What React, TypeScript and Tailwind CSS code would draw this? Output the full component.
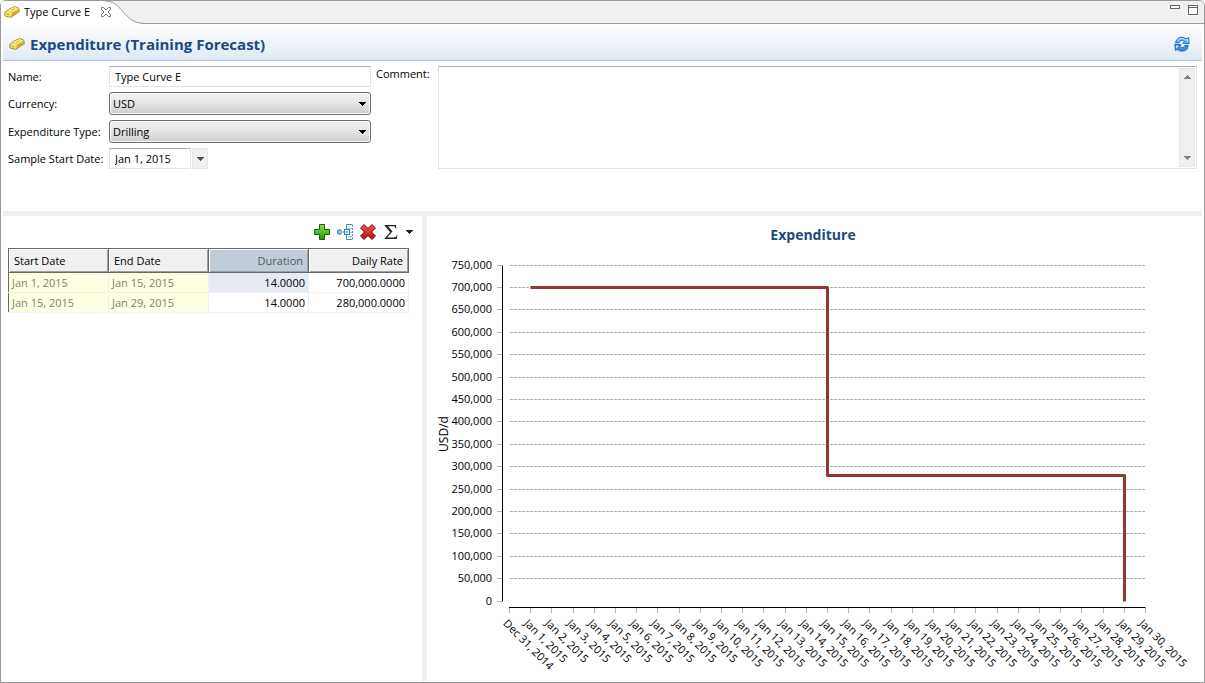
import { useState } from "react";

const FIELD =
  "border border-[#e2e3ea] border-t-[#abadb3] bg-white outline-none text-black";

function GoldBar({ className }: { className: string }) {
  return (
    <svg viewBox="0 0 16 14" className={className} aria-hidden="true">
      <path d="M0.8 7.6 L4.4 4.4 L10.4 1.6 L14.6 3 L15.4 6.6 L6.8 12.4 L1 11 Z" fill="#e3c63c" stroke="#9c8526" strokeWidth="0.9" strokeLinejoin="round" />
      <path d="M4.2 4.9 L10.4 2.1 L14 3.4 L8.2 6.8 Z" fill="#fbf3a4" />
      <path d="M1.5 8 L4 5.3 L8 7.2 L6.6 11.7 L1.6 10.5 Z" fill="#f3e272" />
      <path d="M8.4 7.2 L14.3 3.8 L14.9 6.4 L7.1 11.7 Z" fill="#cfae2a" />
      <path d="M6.6 5 L10.3 3.3 L11.8 3.8 L8.3 5.7 Z" fill="#d8bd42" />
      <path d="M2.7 9.2 L5.4 9.9" stroke="#b99b28" strokeWidth="1" />
      <path d="M8.4 7.1 L14.2 3.7" stroke="#fff8c0" strokeWidth="0.6" />
    </svg>
  );
}

function RefreshIcon() {
  return (
    <svg viewBox="0 0 16 16" className="size-4" aria-hidden="true">
      <path d="M3 13.6 C6 16.6 12 16 14.2 11.4" fill="none" stroke="#9aa6b4" strokeWidth="1.2" />
      <path d="M1.6 6.6 C2.2 2 8 -0.6 12 2.8 L14.6 1.6 L15.2 7.6 L8.8 7.2 L10.4 5.2 C8.4 3.6 5.8 4.4 5 6.8 Z" fill="#5fb0f2" stroke="#1b5fb4" strokeWidth="0.9" strokeLinejoin="round" />
      <path d="M14.2 9.4 C13.6 14 8 16.2 4 13 L1.4 14.4 L0.8 8.2 L7.2 8.8 L5.6 10.6 C7.6 12.2 10.2 11.6 11 9.2 Z" fill="#3f93e4" stroke="#1b5fb4" strokeWidth="0.9" strokeLinejoin="round" />
      <path d="M3.4 5 C5 2.2 9 1.8 11.4 4 L13.4 3.4 L14 6.2" fill="none" stroke="#c9e8ff" strokeWidth="1" />
      <path d="M2 12.4 L1.9 9.6 L4.6 9.8 L3.4 11.6 Z" fill="#c9e8ff" />
    </svg>
  );
}

function Caret({ className }: { className: string }) {
  return (
    <svg viewBox="0 0 7 4" className={className} aria-hidden="true" shapeRendering="crispEdges">
      <path d="M0 0 H7 L3.5 4 Z" fill="currentColor" />
    </svg>
  );
}

function SelectField({ id, options }: { id: string; options: string[] }) {
  return (
    <div className="relative">
      <select
        id={id}
        className="block h-[23px] w-full appearance-none rounded-[3px] border border-[#707070] bg-linear-to-b from-[#f3f3f3] from-0% via-[#e4e4e4] via-50% to-[#cecece] to-100% px-[3px] text-black shadow-[inset_0_0_0_1px_#f8f8f8] outline-none"
      >
        {options.map((o) => (
          <option key={o}>{o}</option>
        ))}
      </select>
      <Caret className="pointer-events-none absolute top-[10px] right-[5px] h-1 w-[7px] text-black" />
    </div>
  );
}

function FormArea() {
  const [name, setName] = useState("Type Curve E");
  const [date, setDate] = useState("Jan 1, 2015");
  return (
    <form className="flex gap-[5px] pt-[5px] pr-[5px] pb-[42px] pl-[5px]">
      <div className="grid w-[363px] shrink-0 grid-cols-[96px_1fr] items-center gap-x-[5px] gap-y-[5px]">
        <label htmlFor="name">Name:</label>
        <input id="name" value={name} onChange={(e) => setName(e.target.value)} className={`${FIELD} h-[21px] w-full px-[5px]`} />
        <label htmlFor="currency">Currency:</label>
        <SelectField id="currency" options={["USD", "CAD"]} />
        <label htmlFor="type" className="whitespace-nowrap">Expenditure Type:</label>
        <SelectField id="type" options={["Drilling", "Completion"]} />
        <label htmlFor="date" className="whitespace-nowrap">Sample Start Date:</label>
        <div className="flex gap-px">
          <input id="date" value={date} onChange={(e) => setDate(e.target.value)} className={`${FIELD} h-[21px] w-[82px] px-[5px]`} />
          <button type="button" aria-label="Choose date" className="flex h-[21px] w-4 items-center justify-center border border-[#e6e6e6] bg-[#f0f0f0]">
            <Caret className="h-1 w-[7px] text-[#505050]" />
          </button>
        </div>
      </div>
      <label htmlFor="comment" className="w-[57px] shrink-0 whitespace-nowrap">Comment:</label>
      <div className={`${FIELD} flex min-w-0 flex-1 self-stretch`}>
        <textarea id="comment" className="min-w-0 flex-1 resize-none px-1 outline-none" />
        <div className="my-px mr-px flex w-4 flex-col items-center justify-between border border-[#e8e8e8] bg-[#efefef] py-[6px] text-[#808080]">
          <Caret className="h-1 w-[7px] rotate-180" />
          <Caret className="h-1 w-[7px]" />
        </div>
      </div>
    </form>
  );
}

function Toolbar() {
  return (
    <div className="flex h-8 items-center justify-end gap-[7px] pr-[9px]">
      <button aria-label="Add row">
        <svg viewBox="0 0 16 16" className="size-4">
          <defs>
            <linearGradient id="plus" x1="0" y1="0" x2="0" y2="1">
              <stop offset="0" stopColor="#8be04a" />
              <stop offset="1" stopColor="#229a08" />
            </linearGradient>
          </defs>
          <path d="M5.5 0.5 H10.5 V5.5 H15.5 V10.5 H10.5 V15.5 H5.5 V10.5 H0.5 V5.5 H5.5 Z" fill="url(#plus)" stroke="#1c5c12" strokeLinejoin="round" />
        </svg>
      </button>
      <button aria-label="Insert row">
        <svg viewBox="0 0 16 16" className="size-4">
          <path d="M0.5 6.5 H2.5 V5 L5.5 8 L2.5 11 V9.5 H0.5 Z" fill="#8fc4ea" stroke="#3c83b8" strokeWidth="0.9" />
          <path d="M15.5 0.5 H9.5 V5 M9.5 11 V15.5 H15.5" fill="none" stroke="#3f8fc4" />
          <path d="M9.5 1 V15" stroke="#3f8fc4" />
          <path d="M6 8 H8" stroke="#2f83bb" />
          <rect x="7.5" y="5.5" width="5" height="5" fill="#d8effc" stroke="#2f7fb8" />
          <path d="M9 8 H11" stroke="#2f7fb8" />
          <path d="M15.5 1 V15" stroke="#6f93ac" strokeDasharray="2 1" />
          <path d="M11 4.5 H15 M13 8.5 H15 M11 12.5 H15" stroke="#9db9cc" />
        </svg>
      </button>
      <button aria-label="Delete row">
        <svg viewBox="0 0 16 16" className="size-4">
          <defs>
            <linearGradient id="cross" x1="0" y1="0" x2="0" y2="1">
              <stop offset="0" stopColor="#ee5a54" />
              <stop offset="1" stopColor="#b80c10" />
            </linearGradient>
          </defs>
          <path d="M4 0.6 L8 4.4 L12 0.6 L15.5 4 L11.6 8 L15.5 12 L12 15.4 L8 11.6 L4 15.4 L0.5 12 L4.4 8 L0.5 4 Z" fill="url(#cross)" stroke="#7c1010" strokeLinejoin="round" />
        </svg>
      </button>
      <button aria-label="Summarize" className="flex items-center gap-[7px]">
        <svg viewBox="0 0 16 16" className="size-4">
          <path d="M1.5 1 H13 L13.4 4.4 H12.6 C12.3 2.8 11.8 2.2 10.2 2.2 H5 L9.4 7.6 L4.2 13.4 H10.8 C12.6 13.4 13.2 12.8 13.8 11.2 H14.6 L13.6 15 H1.5 V14.4 L7.2 8.2 L1.5 1.6 Z" fill="#222" />
        </svg>
        <Caret className="h-1 w-[7px] text-[#222]" />
      </button>
    </div>
  );
}

const ROWS = [
  ["Jan 1, 2015", "Jan 15, 2015", "14.0000", "700,000.0000"],
  ["Jan 15, 2015", "Jan 29, 2015", "14.0000", "280,000.0000"],
];

const TH =
  "h-6 border border-[#696969] py-0 font-normal shadow-[inset_1px_1px_0_#fff,inset_-1px_-1px_0_#a0a0a0]";

function RateTable() {
  return (
    <table className="w-[401px] table-fixed border-collapse">
      <thead>
        <tr>
          <th className={`${TH} bg-[#f0f0f0] px-[5px] text-left`}>Start Date</th>
          <th className={`${TH} bg-[#f0f0f0] px-[5px] text-left`}>End Date</th>
          <th className={`${TH} bg-[#bfcddb] px-[5px] text-right text-[#555]`}>Duration</th>
          <th className={`${TH} bg-[#f0f0f0] px-[5px] text-right`}>Daily Rate</th>
        </tr>
      </thead>
      <tbody>
        {ROWS.map((r, i) => (
          <tr key={r[0]} className="h-5">
            <td className="border border-[#f0f0f0] border-l-[#696969] bg-[#ffffe1] p-0 pl-[3px] text-[#808080]">{r[0]}</td>
            <td className="border border-[#f0f0f0] bg-[#ffffe1] p-0 pl-[3px] text-[#808080]">{r[1]}</td>
            <td className={`border border-[#f0f0f0] p-0 pr-[3px] text-right ${i === 0 ? "bg-[#e6eaf3]" : "bg-white"}`}>{r[2]}</td>
            <td className="border border-[#f0f0f0] p-0 pr-[3px] text-right">{r[3]}</td>
          </tr>
        ))}
      </tbody>
    </table>
  );
}

const X0 = 82.5;
const X_STEP = 21.2;
const Y0 = 385.5;
const Y_SPAN = 336;
const xAt = (day: number) => Math.round(X0 + day * X_STEP - 0.5) + 0.5;
const yAt = (rate: number) => Math.floor(Y0 - (rate / 750000) * Y_SPAN - 0.5) + 0.5;
const RATES = Array.from({ length: 16 }, (_, i) => i * 50000);
const DAYS = Array.from({ length: 31 }, (_, i) => (i === 0 ? "Dec 31, 2014" : `Jan ${i}, 2015`));

function Chart() {
  return (
    <svg viewBox="0 0 775 466" className="block h-auto w-full" role="img" aria-label="Expenditure chart">
      <text x="386" y="24" textAnchor="middle" className="fill-[#1a4a80] text-[14px] font-bold">Expenditure</text>
      <text transform="translate(21 218) rotate(-90)" textAnchor="middle" className="text-[12px]">USD/d</text>
      <path d={`M75.5 ${yAt(750000)} V${Y0}`} stroke="#000" />
      <path d={`M82 391.5 H${xAt(30)}`} stroke="#000" />
      {RATES.map((r) => (
        <g key={r}>
          <path d={`M70 ${yAt(r)} H75`} stroke="#b4b4b4" />
          {r > 0 && <path d={`M83 ${yAt(r)} H718`} stroke="#b0b0b0" strokeDasharray="3 1" />}
          <text x="65" y={yAt(r) + 3.5} textAnchor="end">{r.toLocaleString("en-US")}</text>
        </g>
      ))}
      {DAYS.map((d, i) => (
        <g key={d}>
          <path d={`M${xAt(i)} 392 V397`} stroke="#b4b4b4" />
          <text transform={`translate(${xAt(i) - 7} 408) rotate(45)`}>{d}</text>
        </g>
      ))}
      <path
        d={`M${xAt(1)} ${yAt(700000)} H${xAt(15)} V${yAt(280000)} H${xAt(29)} V${Y0}`}
        fill="none"
        stroke="#943634"
        strokeWidth="3"
        strokeLinejoin="round"
      />
    </svg>
  );
}

export default function App() {
  return (
    <div className="flex min-h-screen flex-col rounded-t-md border border-[#999] bg-white font-['Open_Sans','Noto_Sans',sans-serif] text-[11px] leading-4 text-black">
      <div className="relative flex h-[23px] justify-between rounded-t-md border-b border-[#999] bg-[#f0f0f0]">
        <svg viewBox="0 0 144 23" className="absolute top-0 left-0 h-[23px] w-36" aria-hidden="true">
          <path d="M0 23 V5 Q0 0 5 0 H104 C122 0 122 22.5 144 22.5 V23 Z" fill="#fff" />
          <path d="M104 0 C122 0 122 22.5 144 22.5" fill="none" stroke="#999" />
        </svg>
        <div className="relative flex items-center gap-1 pl-[3px]">
          <GoldBar className="h-[14px] w-4" />
          <span>Type Curve E</span>
          <button aria-label="Close tab" className="ml-[6px]">
            <svg viewBox="0 0 12 12" className="size-3">
              <path d="M1.5 1.5 H3.5 L6 4 L8.5 1.5 H10.5 V3.5 L8 6 L10.5 8.5 V10.5 H8.5 L6 8 L3.5 10.5 H1.5 V8.5 L4 6 L1.5 3.5 Z" fill="#fff" stroke="#666" strokeWidth="0.9" />
            </svg>
          </button>
        </div>
        <div className="flex items-start gap-2 pt-1 pr-[6px]">
          <button aria-label="Minimize" className="h-1 w-[10px] border border-[#666] bg-white" />
          <button aria-label="Maximize" className="flex h-[10px] w-[10px] flex-col border border-[#666] bg-white pt-px">
            <span className="h-px w-full bg-[#666]" />
          </button>
        </div>
      </div>

      <div className="flex flex-1 flex-col px-[2px]">
        <header className="flex h-[37px] items-center justify-between border-b border-[#b4c8e0] bg-linear-to-b from-white to-[#dfe9f5] pt-[3px] pr-[12px] pl-[6px]">
          <h1 className="flex items-center gap-[5px] text-[15px] leading-5 font-bold text-[#1a4a80]">
            <GoldBar className="h-[14px] w-4" />
            Expenditure (Training Forecast)
          </h1>
          <button aria-label="Refresh">
            <RefreshIcon />
          </button>
        </header>

        <FormArea />

        <div className="h-[5px] bg-[#f0f0f0]" />
        <div className="flex flex-1">
          <section className="w-[419px] shrink-0 pl-[5px]">
            <Toolbar />
            <RateTable />
          </section>
          <div className="w-[5px] shrink-0 bg-[#f0f0f0]" />
          <section className="min-w-0 flex-1">
            <Chart />
          </section>
        </div>
      </div>
    </div>
  );
}
